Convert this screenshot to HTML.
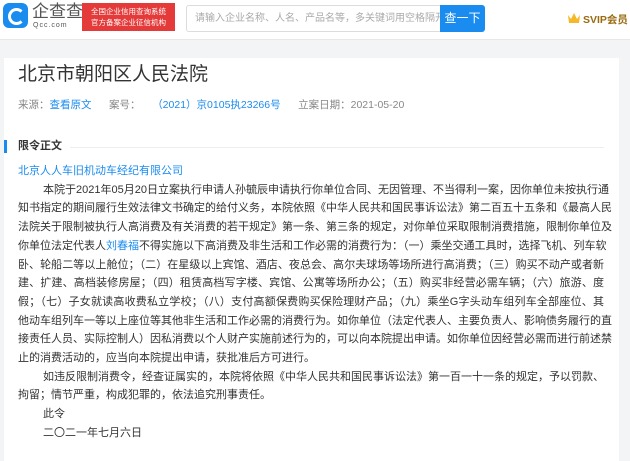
<!DOCTYPE html>
<html><head><meta charset="utf-8"><style>
*{margin:0;padding:0;box-sizing:border-box}
body{width:630px;height:461px;overflow:hidden;background:#f3f4f6;font-family:"Liberation Sans","Noto Sans CJK SC",sans-serif;color:#333;position:relative}
.hd{position:absolute;left:0;top:0;width:630px;height:40px;background:#fff;border-bottom:1px solid #e8e8e8}
.logo{position:absolute;left:3px;top:3px;width:25px;height:25px;background:#1a8cf0;border-radius:6px}
.logo:after{content:"";position:absolute;left:5px;top:5px;width:11px;height:11px;border:3px solid #fff;border-radius:50%;border-right-color:transparent}
.brand{position:absolute;left:32px;top:2px;font-size:17px;color:#555;line-height:20px}
.qcc{position:absolute;left:33px;top:22px;font-size:7px;color:#555;letter-spacing:1px}
.red{position:absolute;left:82px;top:3px;width:93px;height:28px;background:#e43a3a;color:#fff;font-size:7.5px;line-height:11px;padding:3px 3px;text-align:center}
.srch{position:absolute;left:186px;top:5px;width:255px;height:27px;border:1px solid #dcdcdc;border-right:none;border-radius:3px 0 0 3px;font-size:10px;color:#aaa;line-height:25px;padding-left:8px;white-space:nowrap;overflow:hidden}
.btn{position:absolute;left:440px;top:5px;width:45px;height:27px;background:#1a8cf0;color:#fff;font-size:12px;line-height:27px;text-align:center;border-radius:0 3px 3px 0}
.svip{position:absolute;left:583px;top:12px;font-size:10.5px;color:#9a6a10;font-weight:bold;white-space:nowrap}
.crown{position:absolute;left:567px;top:12px;width:14px;height:12px}
.card{position:absolute;left:4px;top:58px;width:615px;height:403px;background:#fff}
.t{position:absolute;left:18px;top:63px;font-size:19px;color:#333;line-height:24px}
.meta{position:absolute;left:18px;top:98px;font-size:10.5px;color:#888;line-height:14px;white-space:nowrap}
.meta a{color:#1a8cf0;text-decoration:none}
.bar{position:absolute;left:4px;top:140px;width:3px;height:13px;background:#1a8cf0}
.sec{position:absolute;left:18px;top:139px;font-size:11px;font-weight:bold;color:#333;line-height:15px}
.ln{position:absolute;left:70px;top:147px;width:534px;height:1px;background:#eee}
.body{position:absolute;left:18px;top:162px;width:586px;font-size:11px;line-height:18.7px;color:#333}
.j{text-align:justify;text-align-last:justify;white-space:nowrap}
.l{white-space:nowrap}
.i{padding-left:25px}
.b{color:#1a8cf0}
</style></head><body>
<div class="hd">
<div class="logo"></div>
<div class="brand">企查查</div>
<div class="qcc">Qcc.com</div>
<div class="red">全国企业信用查询系统<br>官方备案企业征信机构</div>
<div class="srch">请输入企业名称、人名、产品名等，多关键词用空格隔开</div>
<div class="btn">查一下</div>
<svg class="crown" viewBox="0 0 14 12"><path d="M1 3 L4 7 L7 1 L10 7 L13 3 L12 11 L2 11 Z" fill="#f5b828"/></svg>
<div class="svip">SVIP会员</div>
</div>
<div class="card"></div>
<div class="t">北京市朝阳区人民法院</div>
<div class="meta">来源：<a>查看原文</a>&nbsp;&nbsp;&nbsp;&nbsp;&nbsp;&nbsp;案号：&nbsp;&nbsp;&nbsp;&nbsp;<a>（2021）京0105执23266号</a>&nbsp;&nbsp;&nbsp;&nbsp;&nbsp;&nbsp;立案日期：2021-05-20</div>
<div class="bar"></div>
<div class="sec">限令正文</div>
<div class="ln"></div>
<div class="body">
<div class="l b">北京人人车旧机动车经纪有限公司</div>
<div class="j i">本院于2021年05月20日立案执行申请人孙毓辰申请执行你单位合同、无因管理、不当得利一案，因你单位未按执行通</div>
<div class="j">知书指定的期间履行生效法律文书确定的给付义务，本院依照《中华人民共和国民事诉讼法》第二百五十五条和《最高人民</div>
<div class="j">法院关于限制被执行人高消费及有关消费的若干规定》第一条、第三条的规定，对你单位采取限制消费措施，限制你单位及</div>
<div class="j">你单位法定代表人<span class="b">刘春福</span>不得实施以下高消费及非生活和工作必需的消费行为：（一）乘坐交通工具时，选择飞机、列车软</div>
<div class="j">卧、轮船二等以上舱位；（二）在星级以上宾馆、酒店、夜总会、高尔夫球场等场所进行高消费；（三）购买不动产或者新</div>
<div class="j">建、扩建、高档装修房屋；（四）租赁高档写字楼、宾馆、公寓等场所办公；（五）购买非经营必需车辆；（六）旅游、度</div>
<div class="j">假；（七）子女就读高收费私立学校；（八）支付高额保费购买保险理财产品；（九）乘坐G字头动车组列车全部座位、其</div>
<div class="j">他动车组列车一等以上座位等其他非生活和工作必需的消费行为。如你单位（法定代表人、主要负责人、影响债务履行的直</div>
<div class="j">接责任人员、实际控制人）因私消费以个人财产实施前述行为的，可以向本院提出申请。如你单位因经营必需而进行前述禁</div>
<div class="l">止的消费活动的，应当向本院提出申请，获批准后方可进行。</div>
<div class="j i">如违反限制消费令，经查证属实的，本院将依照《中华人民共和国民事诉讼法》第一百一十一条的规定，予以罚款、</div>
<div class="l">拘留；情节严重，构成犯罪的，依法追究刑事责任。</div>
<div class="l i">此令</div>
<div class="l i">二〇二一年七月六日</div>
</div>
</body></html>
